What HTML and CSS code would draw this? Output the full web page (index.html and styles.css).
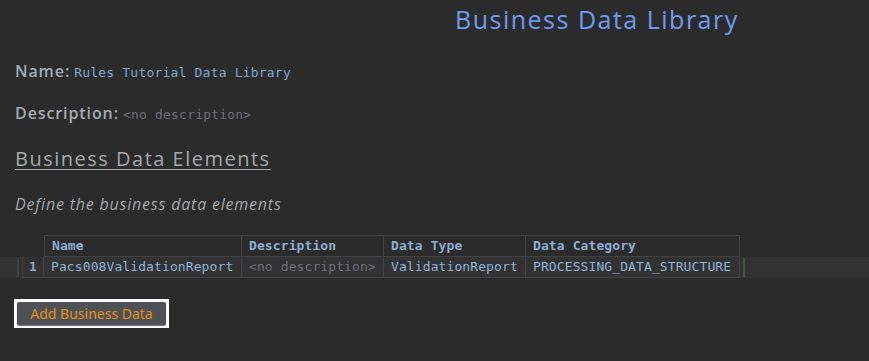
FILE: index.html
```html
<!DOCTYPE html>
<html>
<head>
    <meta charset="UTF-8">
    <title>Business Data Library</title>
    <link rel="stylesheet" href="styles.css">
</head>
<body>
    <div class="page">
        <h1 class="title">Business Data Library</h1>

        <div class="field">
            <span class="field-label">Name:</span>
            <span class="field-value">Rules Tutorial Data Library</span>
        </div>
        <div class="field">
            <span class="field-label">Description:</span>
            <span class="field-value empty">&lt;no description&gt;</span>
        </div>

        <h2 class="section-title">Business Data Elements</h2>
        <p class="section-hint">Define the business data elements</p>

        <!-- business data table -->
        <div class="grid">
            <div class="grid-row header">
                <div class="marker"></div>
                <div class="cell num blank"></div>
                <div class="cell c-name">Name</div>
                <div class="cell c-desc">Description</div>
                <div class="cell c-type">Data Type</div>
                <div class="cell c-cat">Data Category</div>
            </div>
            <div class="grid-row data">
                <div class="marker on"></div>
                <div class="cell num">1</div>
                <div class="cell c-name">Pacs008ValidationReport</div>
                <div class="cell c-desc empty">&lt;no description&gt;</div>
                <div class="cell c-type">ValidationReport</div>
                <div class="cell c-cat">PROCESSING_DATA_STRUCTURE</div>
                <div class="caret"></div>
            </div>
        </div>

        <div class="actions">
            <div class="focus-ring">
                <button class="add-button">Add Business Data</button>
            </div>
        </div>
    </div>
</body>
</html>
```

FILE: styles.css
```css
* {
    box-sizing: border-box;
}
html, body {
    margin: 0;
    padding: 0;
    background-color: #2b2b2b;
}
.page {
    padding: 4px 0 0 0;
    height: 361px;
}
.title {
    margin: 0;
    padding-left: 455px;
    font-family: "Open Sans", sans-serif;
    font-weight: 400;
    font-size: 25px;
    line-height: 30px;
    letter-spacing: 1.5px;
    color: #6e9cf2;
}
.field {
    display: flex;
    align-items: baseline;
    padding-left: 15px;
    height: 21px;
    margin-top: 26px;
}
.field + .field {
    margin-top: 21px;
}
.field-label {
    font-family: "Open Sans", sans-serif;
    font-weight: 600;
    font-size: 16px;
    letter-spacing: 0.9px;
    color: #a4abb2;
    margin-right: 4px;
}
.field-value {
    font-family: "DejaVu Sans Mono", monospace;
    font-size: 13px;
    letter-spacing: 0.2px;
    color: #7ea6d3;
}
.field-value.empty,
.cell.empty {
    color: #6a7178;
}
.section-title {
    margin: 24px 0 0 15px;
    display: inline-block;
    font-family: "Open Sans", sans-serif;
    font-weight: 500;
    font-size: 20px;
    line-height: 24px;
    letter-spacing: 1.5px;
    color: #a5a8ab;
    text-decoration: underline;
    text-underline-offset: 3px;
    text-decoration-thickness: 1px;
}
.section-hint {
    margin: 22px 0 0 15px;
    font-family: "Open Sans", sans-serif;
    font-style: italic;
    font-size: 16px;
    letter-spacing: 0.8px;
    color: #a4a7aa;
}
.grid {
    margin-top: 20px;
}
.grid-row {
    display: flex;
    align-items: stretch;
    height: 22px;
    padding-left: 17px;
}
.grid-row.data {
    height: 21px;
    background-color: #323232;
}
.marker {
    width: 2px;
    margin-right: 3px;
}
.marker.on {
    background-color: #3d3f41;
    margin-top: 1px;
    margin-bottom: 1px;
}
.cell {
    font-family: "DejaVu Sans Mono", monospace;
    font-size: 13px;
    letter-spacing: 0.1px;
    line-height: 20px;
    color: #8fb2da;
    padding-left: 7px;
    white-space: nowrap;
    overflow: hidden;
    border-right: 1px solid #404244;
    border-bottom: 1px solid #404244;
}
.header .cell {
    border-top: 1px solid #404244;
    font-weight: bold;
    color: #8eadd3;
}
.header .cell.blank {
    border-top: none;
    border-bottom: none;
    border-right: none;
}
.header .c-name {
    border-left: 1px solid #404244;
}
.data .cell.num {
    border-left: 1px solid #404244;
    text-align: center;
    padding-left: 0;
    font-weight: bold;
    color: #95a5b8;
}
.num {
    width: 22px;
}
.c-name {
    width: 198px;
}
.c-desc {
    width: 142px;
}
.c-type {
    width: 142px;
}
.c-cat {
    width: 214px;
}
.caret {
    width: 2px;
    margin: 1px 0 1px 3px;
    background-color: #3f5540;
}
.actions {
    padding: 21px 0 0 14px;
}
.focus-ring {
    display: inline-block;
    padding: 3px;
    background-color: #ffffff;
}
.add-button {
    display: block;
    width: 149px;
    height: 23px;
    padding: 0;
    border: none;
    border-radius: 2px;
    background-color: #4e5256;
    box-shadow: 0 1px 1px #6a6e72;
    font-family: "Noto Sans", sans-serif;
    font-size: 14px;
    color: #e48f15;
    cursor: pointer;
}
```
